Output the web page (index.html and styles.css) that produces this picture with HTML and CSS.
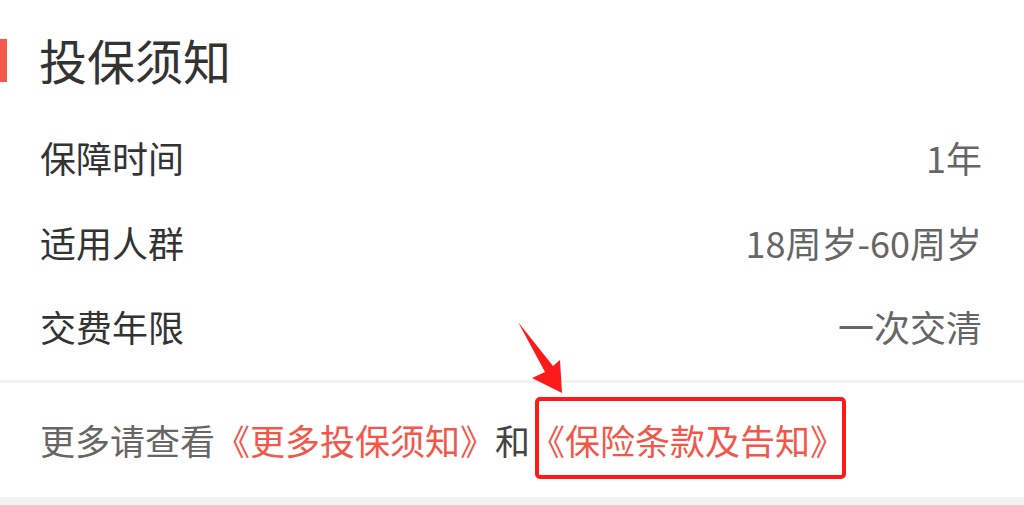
FILE: index.html
```html
<!DOCTYPE html>
<html lang="zh-CN">
<head>
<meta charset="utf-8">
<title>投保须知</title>
<link rel="stylesheet" href="styles.css">
</head>
<body>
<div class="page">
  <section class="card">
    <header class="card-head">
      <span class="bar"></span>
      <h2 class="title">投保须知</h2>
    </header>
    <div class="rows">
      <div class="row"><span class="label">保障时间</span><span class="value">1年</span></div>
      <div class="row"><span class="label">适用人群</span><span class="value">18周岁-60周岁</span></div>
      <div class="row"><span class="label">交费年限</span><span class="value">一次交清</span></div>
    </div>
    <div class="divider"></div>
    <div class="more">
      <span class="muted">更多请查看</span><span class="link">《更多投保须知》</span><span class="and">和</span><span class="link">《保险条款及告知》</span>
    </div>
  </section>
  <div class="band"></div>
  <svg class="annot" width="1024" height="505" viewBox="0 0 1024 505" aria-hidden="true">
    <polygon points="518,322 553,366 560,360 562,393 532,378 545,372" fill="#ff1a1a"/>
    <rect x="537" y="399" width="307" height="78" rx="3" ry="3" fill="none" stroke="#ff1a1a" stroke-width="4"/>
  </svg>
</div>
</body>
</html>
```
FILE: styles.css
```css
* { box-sizing: border-box; }
html, body { margin: 0; padding: 0; background: #ffffff; }
body {
  font-family: "PingFang SC", "Noto Sans CJK SC", "Noto Sans", sans-serif;
  color: #333333;
}
.page {
  position: relative;
  width: 1024px;
  height: 505px;
  overflow: hidden;
}
.card {
  background: #ffffff;
}
.card-head {
  display: flex;
  align-items: flex-start;
  gap: 32px;
  padding-top: 35px;
  height: 115px;
}
.bar {
  width: 7px;
  height: 43px;
  margin-top: 4px;
  background: #f45a4c;
}
.title {
  margin: 0;
  font-size: 48px;
  line-height: 48px;
  font-weight: 400;
  color: #333333;
}
.rows {
  padding: 0 42px 0 40px;
}
.row {
  display: flex;
  justify-content: space-between;
  align-items: center;
  height: 84.5px;
  font-size: 36px;
}
.label { color: #333333; }
.value { color: #666666; }
.divider {
  margin-top: 11px;
  height: 3px;
  background: #f2f2f2;
}
.more {
  display: flex;
  align-items: center;
  height: 114px;
  padding-left: 40px;
  font-size: 35px;
}
.muted { color: #666666; }
.link { color: #f4574a; }
.and { color: #444444; }
.band {
  height: 8px;
  background: #f2f2f2;
}
.annot {
  position: absolute;
  left: 0;
  top: 0;
  pointer-events: none;
}
```
